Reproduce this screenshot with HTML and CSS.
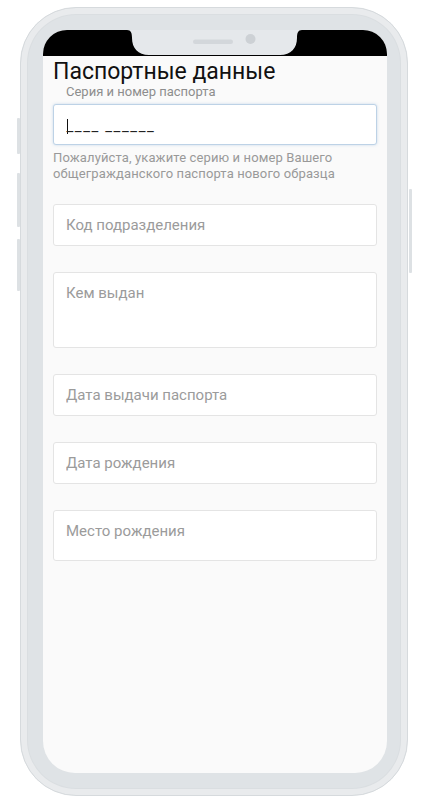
FILE: index.html
```html
<!DOCTYPE html>
<html lang="ru">
<head>
<meta charset="utf-8">
<title>Паспортные данные</title>
<link rel="stylesheet" href="styles.css">
</head>
<body>
<div class="phone">
  <span class="btn btn-l1"></span>
  <span class="btn btn-l2"></span>
  <span class="btn btn-l3"></span>
  <span class="btn btn-r1"></span>
  <div class="screen">
    <svg class="statusbar" width="344" height="26" viewBox="0 0 344 26">
      <rect x="0" y="0" width="344" height="26" fill="#000"/>
      <path d="M84 0 C88 0 89 3 89 8 C89 18 95 25 106 25 H237 C248 25 254 18 254 8 C254 3 255 0 259 0 Z" fill="#e5e8eb"/>
      <rect x="150" y="9.5" width="40" height="4.5" rx="2.25" fill="#d3d7db"/>
      <circle cx="207.5" cy="9" r="5" fill="#cdd1d5"/>
    </svg>
    <div class="content">
      <h1 class="title">Паспортные данные</h1>
      <div class="label">Серия и номер паспорта</div>
      <div class="field field-active" role="textbox"><span class="caret"></span>____ ______</div>
      <p class="hint">Пожалуйста, укажите серию и номер Вашего общегражданского паспорта нового образца</p>
      <input class="field field-gap-top" type="text" placeholder="Код подразделения">
      <textarea class="field area-big" placeholder="Кем выдан"></textarea>
      <input class="field" type="text" placeholder="Дата выдачи паспорта">
      <input class="field" type="text" placeholder="Дата рождения">
      <textarea class="field area-small" placeholder="Место рождения"></textarea>
    </div>
  </div>
</div>
</body>
</html>
```
FILE: styles.css
```css
html, body {
  margin: 0;
  padding: 0;
  background: #ffffff;
}

body {
  font-family: Roboto, "Noto Sans", Arial, sans-serif;
}

.phone {
  position: relative;
  box-sizing: border-box;
  width: 388px;
  height: 789px;
  margin: 7px 0 0 20px;
  padding: 22px 20px 22px 22px;
  border-radius: 56px;
  background: #dfe3e6;
  border: 1px solid #d6dadd;
  box-shadow: inset 0 0 0 6px #e9ebed, inset 0 0 0 7px #dadee1;
}

.btn {
  position: absolute;
  width: 3px;
  background: #dde1e4;
  border-radius: 1px;
}
.btn-l1 { left: -4px; top: 110px; height: 36px; }
.btn-l2 { left: -4px; top: 165px; height: 54px; }
.btn-l3 { left: -4px; top: 231px; height: 52px; }
.btn-r1 { right: -5px; top: 181px; height: 84px; }

.screen {
  width: 344px;
  height: 743px;
  border-radius: 24px 24px 32px 32px;
  background: #fafafa;
  overflow: hidden;
}

.statusbar {
  display: block;
}

.content {
  display: flex;
  flex-direction: column;
  padding: 5px 10px 0 10px;
}

.title {
  margin: 0;
  font-size: 23px;
  line-height: 21px;
  font-weight: 400;
  color: #111;
}

.label {
  margin: 3px 0 6px 13px;
  font-size: 13px;
  line-height: 13px;
  color: #8d8d8d;
}

.field {
  box-sizing: border-box;
  display: block;
  width: 324px;
  height: 42px;
  margin: 0 0 26px 0;
  padding: 10px 12px 0 12px;
  border: 1px solid #e4e4e4;
  border-radius: 3px;
  background: #ffffff;
  font-family: Roboto, "Noto Sans", Arial, sans-serif;
  font-size: 15px;
  line-height: 20px;
  color: #333;
  outline: none;
  vertical-align: top;
}

input.field {
  padding-top: 0;
}

.field::placeholder {
  color: #9b9b9b;
  opacity: 1;
}

.field-active {
  height: 41px;
  margin-bottom: 5px;
  padding: 11px 12px 0 13px;
  border-color: #bdd2e6;
  box-shadow: 0 0 3px rgba(110, 160, 210, 0.35);
  font-size: 15px;
  letter-spacing: 1.6px;
  color: #222;
}

.caret {
  display: inline-block;
  width: 0;
  height: 15px;
  border-left: 1px solid #111;
  vertical-align: -3px;
  margin-right: -1.6px;
}

.hint {
  margin: 0 0 22px 0;
  font-size: 13px;
  line-height: 16px;
  letter-spacing: 0.12px;
  color: #999999;
}

.area-big {
  height: 76px;
  resize: none;
}

.area-small {
  height: 51px;
  resize: none;
}
```
